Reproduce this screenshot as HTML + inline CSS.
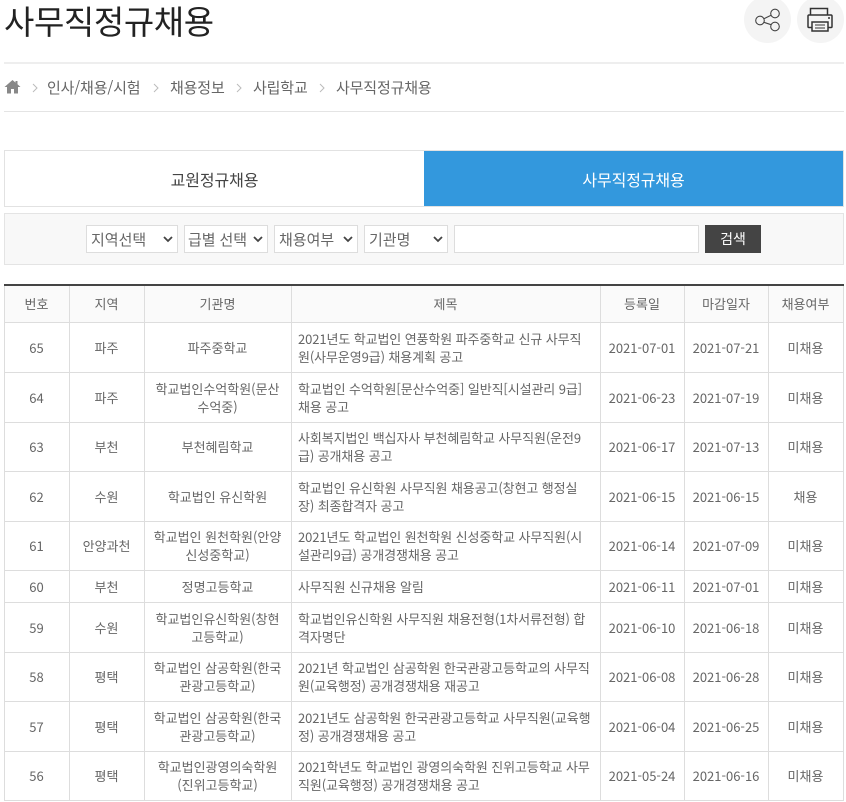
<!DOCTYPE html>
<html lang="ko"><head><meta charset="utf-8"><title>사무직정규채용</title>
<style>
html,body{margin:0;padding:0;background:#fff}
body{width:846px;height:802px;overflow:hidden;position:relative;font-family:"Noto Sans CJK KR","Liberation Sans",sans-serif;color:#666}
.abs{position:absolute;white-space:nowrap}
h1{position:absolute;left:4px;top:-4px;margin:0;font-size:33px;font-weight:400;line-height:48px;color:#222;white-space:nowrap;letter-spacing:-.4px}
.circ{position:absolute;top:-4px;width:47px;height:47px;border-radius:50%;background:#f4f4f4}
.hr{position:absolute;left:4px;width:840px}
.bc{position:absolute;top:78px;font-size:15px;line-height:20px;color:#666;white-space:nowrap;letter-spacing:-.15px}
.tab{position:absolute;top:150px;height:57px;line-height:57px;text-align:center;font-size:16px;box-sizing:border-box;letter-spacing:-.1px}
.sel{position:absolute;top:225px;height:28px;box-sizing:border-box;border:1px solid #ddd;background:#fff;font-size:15px;line-height:28px;padding-left:4px;color:#666;white-space:nowrap}
.sel svg{position:absolute;right:4px;top:10px}
table{position:absolute;left:4px;top:284px;width:839px;border-collapse:collapse;table-layout:fixed;border-top:2px solid #444;font-size:13px;line-height:18px;color:#666}
td,th{border:1px solid #ddd;text-align:center;padding:1px 7px 0 6px;font-weight:400;box-sizing:border-box;white-space:nowrap}
th{background:#fafafa;height:37px;padding-top:0}
td.t{text-align:left;letter-spacing:-.1px;padding-left:6px}
</style></head><body>
<h1>사무직정규채용</h1>
<div class="circ" style="left:744px"><svg width="47" height="47" style="position:absolute;left:0;top:0" fill="none" stroke="#444" stroke-width="1.1"><circle cx="16" cy="24.500" r="4.300"/><circle cx="31" cy="17.500" r="4.300"/><circle cx="31" cy="30.500" r="4.300"/><path d="M19.900 22.700L27.100 19.300M19.900 26.300L27.100 28.700"/></svg></div>
<div class="circ" style="left:797px"><svg width="47" height="47" style="position:absolute;left:0;top:0" fill="none" stroke="#333" stroke-width="1.500"><path d="M13.500 19V12.500H30.500V19"/><rect x="11" y="19" width="24" height="12.500" rx="1"/><rect x="15" y="26" width="16" height="9" fill="#f4f4f4"/><path d="M18 29H28M18 32H28" stroke-width="1"/><path d="M31 22H33" stroke-width="1.500"/></svg></div>
<div class="hr" style="top:62px;height:2px;background:#eee"></div>
<svg class="abs" style="left:4px;top:79px" width="17" height="15" viewBox="0 0 17 15"><path d="M8.500 1L0.500 8H3V14.500H7V10H10V14.500H14V8H16.500L13.500 5.300V2H11.500V3.600Z" fill="#888"/></svg>
<svg class="abs" style="left:0;top:80px" width="340" height="14" fill="none" stroke="#bbb" stroke-width="1"><path d="M33 4L37 8L33 12M154 4L158 8L154 12M237 4L241 8L237 12M320 4L324 8L320 12"/></svg>
<div class="bc" style="left:47px">인사/채용/시험</div>
<div class="bc" style="left:170px">채용정보</div>
<div class="bc" style="left:253px">사립학교</div>
<div class="bc" style="left:336px">사무직정규채용</div>
<div class="hr" style="top:111px;height:1px;background:#e4e4e4"></div>
<div class="tab" style="left:4px;width:420px;border:1px solid #e2e2e2;border-right:0;background:#fff;color:#444">교원정규채용</div>
<div class="tab" style="left:424px;width:420px;border:1px solid #e2e2e2;border-left:0;background:#3398dd;color:#fff">사무직정규채용</div>
<div class="abs" style="left:4px;top:213px;width:840px;height:52px;box-sizing:border-box;border:1px solid #e4e4e4;background:#f8f8f8"></div>
<div class="sel" style="left:86px;width:92px">지역선택<svg width="10" height="7" fill="none" stroke="#444" stroke-width="1.800"><path d="M1 1L5 5L9 1"/></svg></div>
<div class="sel" style="left:184px;width:84px;padding-left:3px;letter-spacing:-.1px">급별 선택<svg width="10" height="7" fill="none" stroke="#444" stroke-width="1.800"><path d="M1 1L5 5L9 1"/></svg></div>
<div class="sel" style="left:274px;width:84px">채용여부<svg width="10" height="7" fill="none" stroke="#444" stroke-width="1.800"><path d="M1 1L5 5L9 1"/></svg></div>
<div class="sel" style="left:364px;width:84px">기관명<svg width="10" height="7" fill="none" stroke="#444" stroke-width="1.800"><path d="M1 1L5 5L9 1"/></svg></div>
<div class="sel" style="left:454px;width:245px"></div>
<div class="abs" style="left:705px;top:225px;width:56px;height:28px;background:#444;color:#fff;font-size:14px;line-height:28px;text-align:center">검색</div>
<table>
<colgroup><col style="width:65px"><col style="width:75px"><col style="width:147px"><col style="width:309px"><col style="width:84px"><col style="width:84px"><col style="width:75px"></colgroup>
<tr><th>번호</th><th>지역</th><th>기관명</th><th>제목</th><th>등록일</th><th>마감일자</th><th>채용여부</th></tr>
<tr style="height:50px"><td>65</td><td>파주</td><td>파주중학교</td><td class="t">2021년도 학교법인 연풍학원 파주중학교 신규 사무직<br>원(사무운영9급) 채용계획 공고</td><td>2021-07-01</td><td>2021-07-21</td><td>미채용</td></tr>
<tr style="height:50px"><td>64</td><td>파주</td><td>학교법인수억학원(문산<br>수억중)</td><td class="t">학교법인 수억학원[문산수억중] 일반직[시설관리 9급]<br>채용 공고</td><td>2021-06-23</td><td>2021-07-19</td><td>미채용</td></tr>
<tr style="height:49px"><td>63</td><td>부천</td><td>부천혜림학교</td><td class="t">사회복지법인 백십자사 부천혜림학교 사무직원(운전9<br>급) 공개채용 공고</td><td>2021-06-17</td><td>2021-07-13</td><td>미채용</td></tr>
<tr style="height:50px"><td>62</td><td>수원</td><td>학교법인 유신학원</td><td class="t">학교법인 유신학원 사무직원 채용공고(창현고 행정실<br>장) 최종합격자 공고</td><td>2021-06-15</td><td>2021-06-15</td><td>채용</td></tr>
<tr style="height:49px"><td>61</td><td>안양과천</td><td>학교법인 원천학원(안양<br>신성중학교)</td><td class="t">2021년도 학교법인 원천학원 신성중학교 사무직원(시<br>설관리9급) 공개경쟁채용 공고</td><td>2021-06-14</td><td>2021-07-09</td><td>미채용</td></tr>
<tr style="height:32px"><td>60</td><td>부천</td><td>정명고등학교</td><td class="t">사무직원 신규채용 알림</td><td>2021-06-11</td><td>2021-07-01</td><td>미채용</td></tr>
<tr style="height:50px"><td>59</td><td>수원</td><td>학교법인유신학원(창현<br>고등학교)</td><td class="t">학교법인유신학원 사무직원 채용전형(1차서류전형) 합<br>격자명단</td><td>2021-06-10</td><td>2021-06-18</td><td>미채용</td></tr>
<tr style="height:49px"><td>58</td><td>평택</td><td>학교법인 삼공학원(한국<br>관광고등학교)</td><td class="t">2021년 학교법인 삼공학원 한국관광고등학교의 사무직<br>원(교육행정) 공개경쟁채용 재공고</td><td>2021-06-08</td><td>2021-06-28</td><td>미채용</td></tr>
<tr style="height:50px"><td>57</td><td>평택</td><td>학교법인 삼공학원(한국<br>관광고등학교)</td><td class="t">2021년도 삼공학원 한국관광고등학교 사무직원(교육행<br>정) 공개경쟁채용 공고</td><td>2021-06-04</td><td>2021-06-25</td><td>미채용</td></tr>
<tr style="height:49px"><td>56</td><td>평택</td><td>학교법인광영의숙학원<br>(진위고등학교)</td><td class="t">2021학년도 학교법인 광영의숙학원 진위고등학교 사무<br>직원(교육행정) 공개경쟁채용 공고</td><td>2021-05-24</td><td>2021-06-16</td><td>미채용</td></tr>
</table>
</body></html>
